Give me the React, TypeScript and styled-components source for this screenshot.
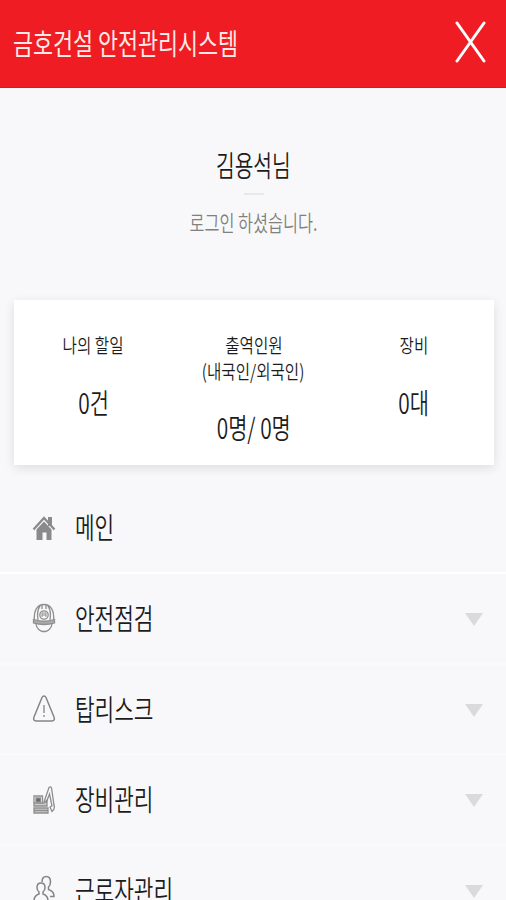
import React from "react";
import styled, { createGlobalStyle } from "styled-components";

const GlobalStyle = createGlobalStyle`
  * { box-sizing: border-box; }
  html, body { margin: 0; padding: 0; background: #f8f8fa; }
  body { font-family: "Noto Sans CJK KR", "Noto Sans", sans-serif; overflow: hidden; }
  p, h1, ul { margin: 0; padding: 0; }
`;

const Screen = styled.main`
  width: 506px;
  height: 900px;
  overflow: hidden;
  display: flex;
  flex-direction: column;
  background: #f8f8fa;
`;

const Header = styled.header`
  height: 88px;
  flex: none;
  display: flex;
  align-items: center;
  justify-content: space-between;
  padding: 0 20px 2px 13px;
  background: #ef1c24;
  border-bottom: 1px solid #e2141c;
`;

const Narrow = styled.span<{ $size: number; $squeeze: number; $color?: string; $left?: boolean; $weight?: number }>`
  display: block;
  white-space: nowrap;
  font-size: ${(p) => p.$size}px;
  line-height: 1;
  font-weight: ${(p) => p.$weight ?? 350};
  color: ${(p) => p.$color ?? "#1c1c1c"};
  transform: scaleX(${(p) => p.$squeeze});
  transform-origin: ${(p) => (p.$left ? "left" : "center")} center;
`;

const CloseButton = styled.button`
  border: 0;
  padding: 0;
  margin-bottom: 2px;
  background: none;
  display: flex;
`;

const Profile = styled.section`
  height: 212px;
  flex: none;
  display: flex;
  flex-direction: column;
  align-items: center;
  padding-top: 62px;
`;

const ShortRule = styled.div`
  width: 20px;
  height: 2px;
  margin: 14px 0 15px 2px;
  background: #e8e8ea;
`;

const Card = styled.section`
  height: 165px;
  flex: none;
  margin: 0 12px 0 14px;
  display: grid;
  grid-template-columns: repeat(3, 1fr);
  padding-top: 35px;
  background: #fff;
  box-shadow: 0 3px 10px rgba(0, 0, 0, 0.11);
`;

const Stat = styled.div`
  display: flex;
  flex-direction: column;
  align-items: center;
  min-width: 0;
  margin-left: -1px;
`;

const StatLabel = styled.div`
  display: flex;
  flex-direction: column;
  align-items: center;
  gap: 6px;
  margin-bottom: 33px;
`;

const Menu = styled.ul`
  list-style: none;
  padding-top: 18px;
`;

const MenuRow = styled.li<{ $strong?: boolean }>`
  height: ${(p) => (p.$strong ? 91 : 90.7)}px;
  display: flex;
  align-items: center;
  padding: 0 23px 0 32px;
  border-bottom: 2px solid ${(p) => (p.$strong ? "#fff" : "#fafafc")};
`;

const IconSlot = styled.span`
  width: 24px;
  height: 32px;
  margin-right: 19px;
  display: flex;
  align-items: center;
  justify-content: center;
  flex: none;
`;

const MenuText = styled.div`
  flex: 1;
  min-width: 0;
  padding-bottom: 2px;
`;

const Arrow = styled.span`
  border-left: 9px solid transparent;
  border-right: 9px solid transparent;
  border-top: 13px solid #dadadb;
  margin-top: 2px;
`;

const HomeIcon = () => (
  <svg width="24" height="28" viewBox="0 0 24 28">
    <path d="M16 3h4v9h-4z" fill="#8a8a8a" />
    <path d="M1.5 15.5 12 4l10.500 11.500" fill="none" stroke="#8a8a8a" strokeWidth="2.300" />
    <path d="M4.500 15.500 12 7.500l7.500 8V26h-5v-7.500h-4V26h-6z" fill="#8a8a8a" />
  </svg>
);

const HelmetIcon = () => (
  <svg width="24" height="30" viewBox="0 0 24 30" fill="none" stroke="#8e8e8e" strokeWidth="1.300">
    <path d="M2.500 17C1.500 7.500 5.500 1.500 12 1.500S22.500 7.500 21.500 17" />
    <path d="M8 3C5.500 6.500 5 11 6 17M16 3c2.500 3.500 3 8 2 14M10 2v4m4-4v4" />
    <circle cx="12" cy="12" r="4.200" />
    <path d="M10 14v-4h4v4M10 12h4" strokeWidth="1" />
    <path d="M1.500 16.500c7 2.300 14 2.300 21 0v3.500c-7 2-14 2-21 0z" fill="#aaa" />
    <path d="M4 21c.5 4.500 4 7.500 8 7.500s7.500-3 8-7.500M10 28.500h4" />
  </svg>
);

const WarningIcon = () => (
  <svg width="24" height="30" viewBox="0 0 24 30" fill="none" stroke="#858585" strokeWidth="1.500">
    <path d="M10 3.500c1-2 3-2 4 0l8 19.500c1 2.500 0 4-2 4H4c-2 0-3-1.500-2-4z" />
    <path d="M12 11v8M12 21v2" strokeWidth="1.300" />
  </svg>
);

const ExcavatorIcon = () => (
  <svg width="24" height="30" viewBox="0 0 24 30" fill="none" stroke="#8e8e8e" strokeWidth="1.300">
    <path d="M2 18v-7h8.500v7" />
    <path d="M4 13h4.500v4H4z" fill="#666" />
    <path d="M2 18h10l3-3v6H2z" fill="#ccc" />
    <path d="M2 23h14v5H2zM2 25.500h14" fill="#ccc" />
    <path d="M12 17 17 2.500c1-1 2-1 2.500.5L22 20c1 3 0 5-2 6.500L18 22l2-1-2.500-12-3.500 9" />
  </svg>
);

const WorkersIcon = () => (
  <svg width="24" height="30" viewBox="0 0 24 30" fill="none" stroke="#858585" strokeWidth="1.500">
    <path d="M10 7c0-3.500 1.500-5.500 4.200-5.500S18.500 3.500 18.500 7c0 2-.7 3.800-2 5v2.500c3.500 1 5.500 2.500 5.500 7h-4" />
    <path d="M2 26c0-4 1.500-6 5-7v-2c-1.300-1-2-2.500-2-4.500C5 9.500 6.500 8 9 8s4 1.500 4 4.500c0 2-.7 3.500-2 4.500v2c3.500 1 5 3 5 7z" />
  </svg>
);

const items = [
  { label: "메인", Icon: HomeIcon, leaf: true },
  { label: "안전점검", Icon: HelmetIcon },
  { label: "탑리스크", Icon: WarningIcon },
  { label: "장비관리", Icon: ExcavatorIcon },
  { label: "근로자관리", Icon: WorkersIcon },
];

const stats = [
  { labels: ["나의 할일"], value: "0건" },
  { labels: ["출역인원", "(내국인/외국인)"], value: "0명/ 0명" },
  { labels: ["장비"], value: "0대" },
];

export default function App() {
  return (
    <Screen>
      <GlobalStyle />
      <Header>
        <h1>
          <Narrow $size={29} $squeeze={0.75} $color="#ffe9e6" $left $weight={400}>
            금호건설 안전관리시스템
          </Narrow>
        </h1>
        <CloseButton aria-label="닫기">
          <svg width="31" height="42" viewBox="0 0 31 42">
            <path d="M2 2 29 40M29 2 2 40" stroke="#fff" strokeWidth="3" strokeLinecap="round" />
          </svg>
        </CloseButton>
      </Header>
      <Profile>
        <Narrow $size={29} $squeeze={0.7}>김용석님</Narrow>
        <ShortRule />
        <Narrow $size={22} $squeeze={0.74} $color="#808080">로그인 하셨습니다.</Narrow>
      </Profile>
      <Card>
        {stats.map((s) => (
          <Stat key={s.value}>
            <StatLabel>
              {s.labels.map((l) => (
                <Narrow key={l} $size={19.5} $squeeze={0.8}>{l}</Narrow>
              ))}
            </StatLabel>
            <Narrow $size={28} $squeeze={0.745}>{s.value}</Narrow>
          </Stat>
        ))}
      </Card>
      <Menu>
        {items.map(({ label, Icon, leaf }) => (
          <MenuRow key={label} $strong={leaf}>
            <IconSlot><Icon /></IconSlot>
            <MenuText>
              <Narrow $size={29} $squeeze={0.735} $left>{label}</Narrow>
            </MenuText>
            {!leaf && <Arrow />}
          </MenuRow>
        ))}
      </Menu>
    </Screen>
  );
}
